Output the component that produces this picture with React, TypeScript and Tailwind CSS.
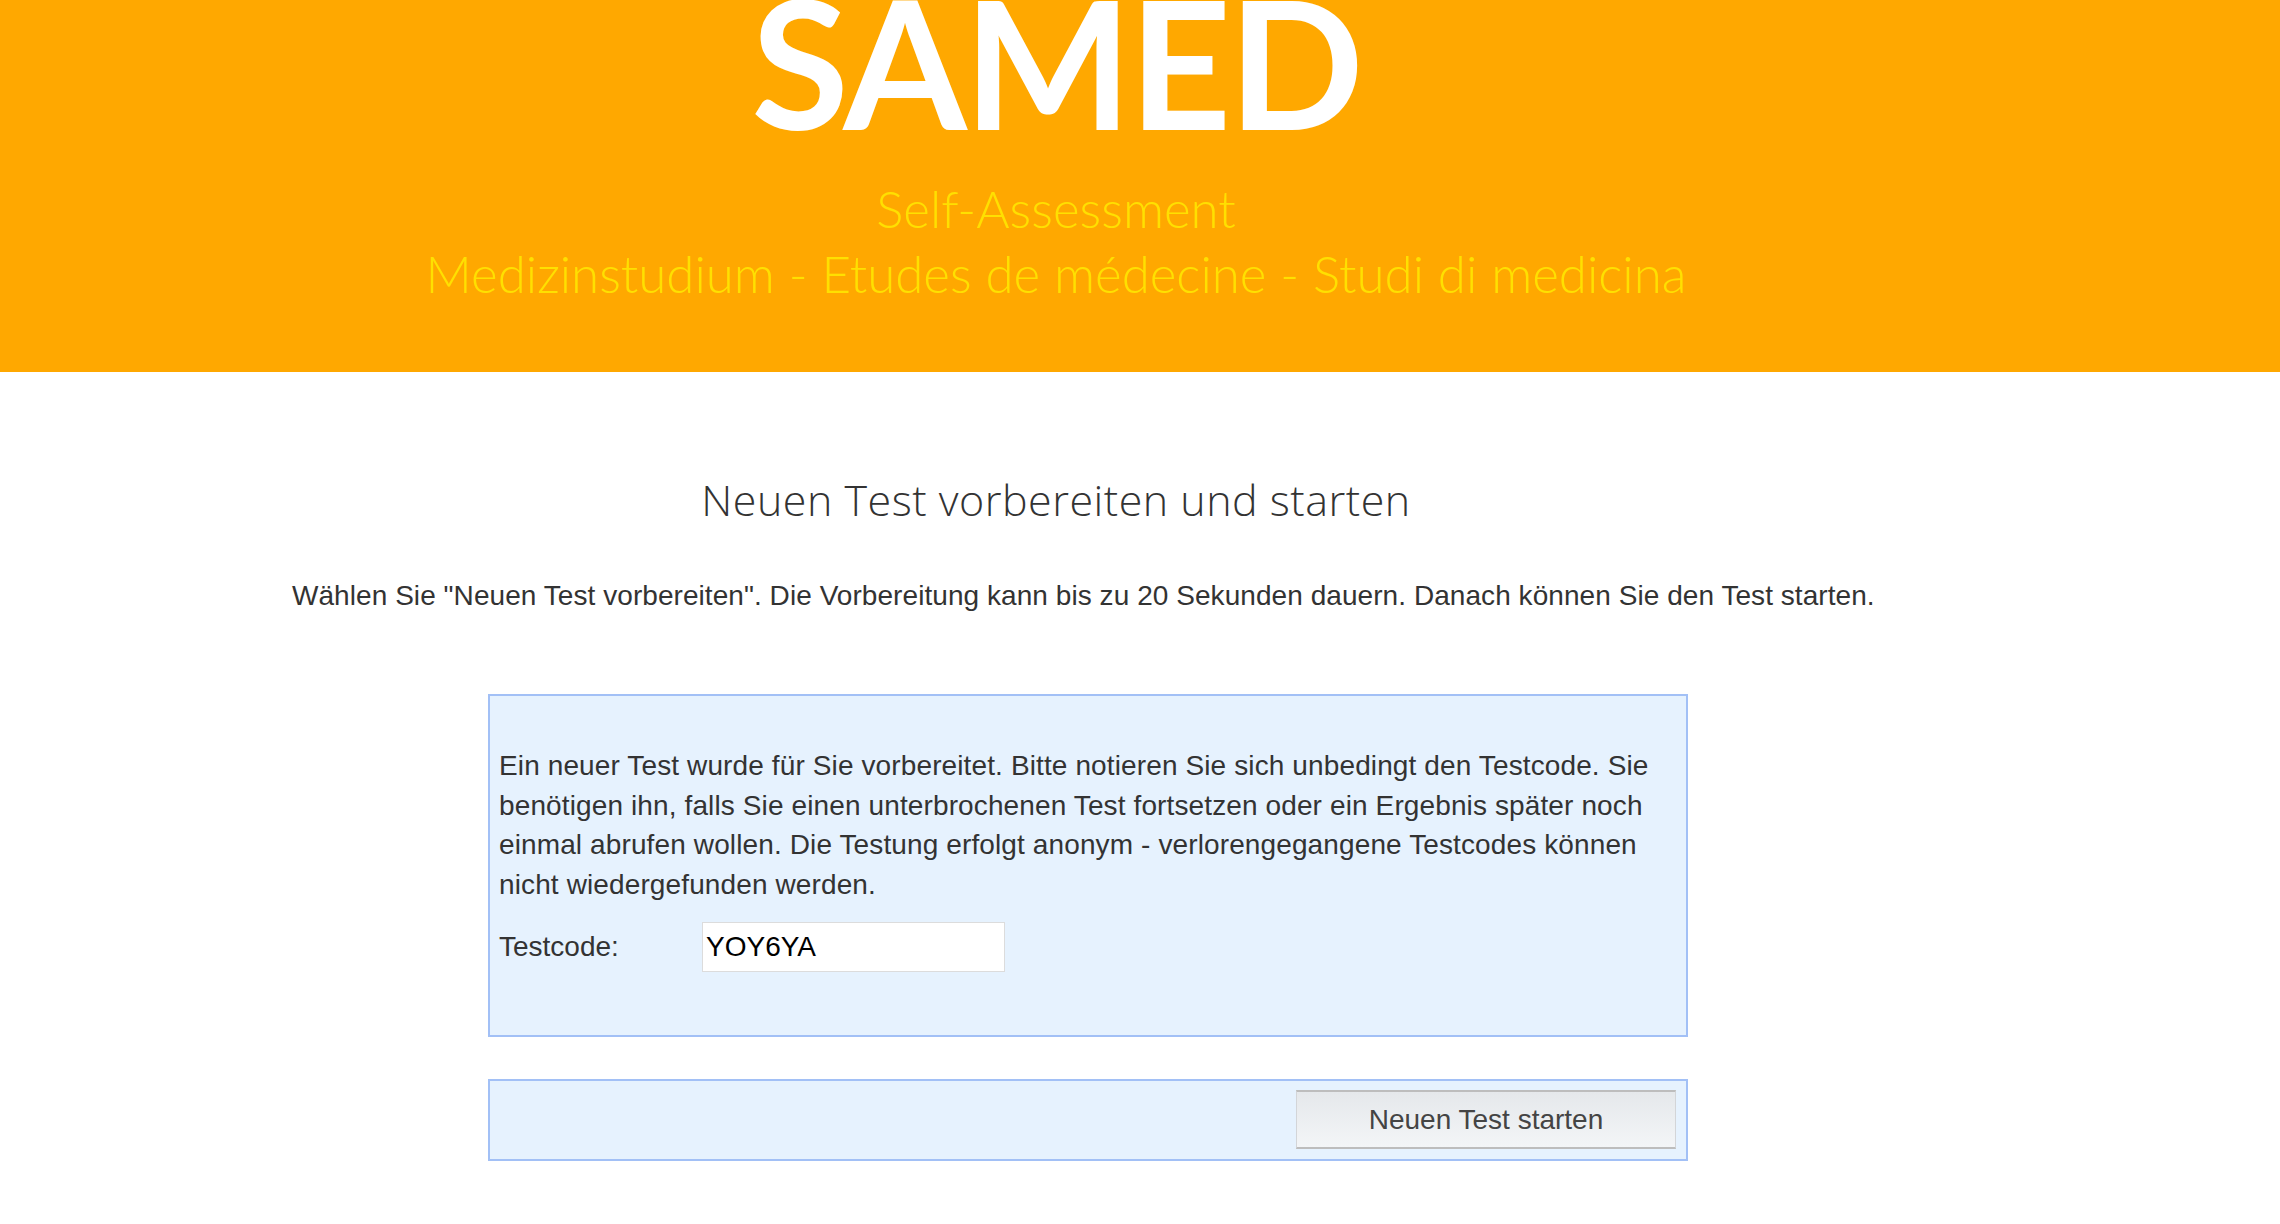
export default function App() {
  return (
    <div className="w-[2280px] h-[1224px] bg-white overflow-hidden font-['Liberation_Sans',Arial,sans-serif] text-[#333]">
      <Header />
      <main className="flex flex-col">
        <h2 className="w-[2112px] mt-[104px] text-center font-['Open_Sans',sans-serif] font-light text-[43px] leading-[48px] tracking-[0.5px] text-[#333]">
          Neuen Test vorbereiten und starten
        </h2>
        <p className="mt-[52px] pl-[292px] text-[28px] leading-[40px] tracking-[0.06px] text-[#333] whitespace-nowrap">
          Wählen Sie "Neuen Test vorbereiten". Die Vorbereitung kann bis zu 20 Sekunden dauern. Danach können Sie den Test starten.
        </p>
        <TestCodeBox code="YOY6YA" />
        <div className="ml-[488px] mt-[42px] w-[1200px] h-[82px] border-2 border-[#a2c0f6] bg-[#e6f2fe] flex justify-end items-start pt-[9px] pr-[10px]">
          <button className="w-[380px] h-[59px] border-y-2 border-x border-y-[#bdbdbd] border-x-[#d3d5d8] bg-gradient-to-b from-[#e5e8eb] to-[#f3f5f7] text-[28px] text-[#444]">
            Neuen Test starten
          </button>
        </div>
      </main>
    </div>
  );
}

function Header() {
  return (
    <header className="h-[372px] bg-[#ffa800] overflow-hidden">
      <div className="w-[2112px] flex flex-col items-center">
        <h1 className="-mt-[28px] font-['Lato',sans-serif] font-bold text-[178px] leading-[178px] tracking-[-3px] text-white">
          SAMED
        </h1>
        <div className="mt-[26px] font-['Lato',sans-serif] font-light text-[51px] leading-[65px] text-[#ffe000] text-center">
          <div>Self-Assessment</div>
          <div>Medizinstudium - Etudes de médecine - Studi di medicina</div>
        </div>
      </div>
    </header>
  );
}

function TestCodeBox({ code }: { code: string }) {
  return (
    <div className="ml-[488px] mt-[78px] w-[1200px] h-[343px] border-2 border-[#a2c0f6] bg-[#e6f2fe] pt-[50px] pl-[9px]">
      <p className="text-[28px] leading-[39.5px] tracking-[0.12px] text-[#333]">
        Ein neuer Test wurde für Sie vorbereitet. Bitte notieren Sie sich unbedingt den Testcode. Sie
        <br />
        benötigen ihn, falls Sie einen unterbrochenen Test fortsetzen oder ein Ergebnis später noch
        <br />
        einmal abrufen wollen. Die Testung erfolgt anonym - verlorengegangene Testcodes können
        <br />
        nicht wiedergefunden werden.
      </p>
      <div className="mt-[18px] flex items-center h-[50px]">
        <span className="w-[203px] text-[28px] leading-[40px] text-[#333]">Testcode:</span>
        <div className="w-[303px] h-[50px] border border-[#dcdcdc] bg-white flex items-center pl-[3px] text-[28px] text-black">
          {code}
        </div>
      </div>
    </div>
  );
}
